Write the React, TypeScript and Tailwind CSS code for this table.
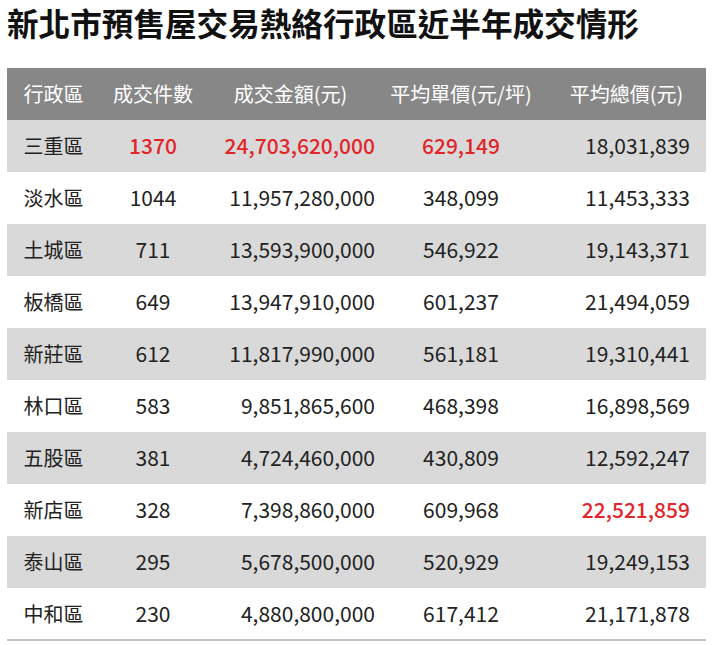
import React from 'react';

interface Row {
  area: string;
  count: string;
  amount: string;
  unit: string;
  avg: string;
  hot?: ('count' | 'amount' | 'unit' | 'avg')[];
}

const rows: Row[] = [
  { area: '三重區', count: '1370', amount: '24,703,620,000', unit: '629,149', avg: '18,031,839', hot: ['count', 'amount', 'unit'] },
  { area: '淡水區', count: '1044', amount: '11,957,280,000', unit: '348,099', avg: '11,453,333' },
  { area: '土城區', count: '711', amount: '13,593,900,000', unit: '546,922', avg: '19,143,371' },
  { area: '板橋區', count: '649', amount: '13,947,910,000', unit: '601,237', avg: '21,494,059' },
  { area: '新莊區', count: '612', amount: '11,817,990,000', unit: '561,181', avg: '19,310,441' },
  { area: '林口區', count: '583', amount: '9,851,865,600', unit: '468,398', avg: '16,898,569' },
  { area: '五股區', count: '381', amount: '4,724,460,000', unit: '430,809', avg: '12,592,247' },
  { area: '新店區', count: '328', amount: '7,398,860,000', unit: '609,968', avg: '22,521,859', hot: ['avg'] },
  { area: '泰山區', count: '295', amount: '5,678,500,000', unit: '520,929', avg: '19,249,153' },
  { area: '中和區', count: '230', amount: '4,880,800,000', unit: '617,412', avg: '21,171,878' },
];

const font = { fontFamily: '"Noto Sans CJK TC", "Noto Sans", sans-serif' };

const App: React.FC = () => {
  const tone = (row: Row, key: 'count' | 'amount' | 'unit' | 'avg') =>
    row.hot?.includes(key) ? 'text-[#e1262b] font-medium' : 'text-[#222222]';

  return (
    <div className="w-[720px] h-[645px] bg-white overflow-hidden" style={font}>
      {/* Title */}
      <h1 className="pl-[7px] text-[31.6px] leading-[44px] font-bold text-[#111111]">
        新北市預售屋交易熱絡行政區近半年成交情形
      </h1>

      {/* Table */}
      <table className="mt-[24px] ml-[7px] w-[699px] table-fixed border-collapse text-[20px]">
        <colgroup>
          <col className="w-[93px]" />
          <col className="w-[106px]" />
          <col className="w-[169px]" />
          <col className="w-[172px]" />
          <col className="w-[159px]" />
        </colgroup>
        <thead>
          <tr className="h-[52px] bg-[#878787] text-white">
            <th className="font-normal text-center">行政區</th>
            <th className="font-normal text-center">成交件數</th>
            <th className="font-normal text-center">成交金額(元)</th>
            <th className="font-normal text-center">平均單價(元/坪)</th>
            <th className="font-normal text-center">平均總價(元)</th>
          </tr>
        </thead>
        <tbody>
          {rows.map((row, i) => (
            <tr
              key={row.area}
              className={`h-[52px] ${i % 2 === 0 ? 'bg-[#d9d9d9]' : 'bg-white'} ${i === rows.length - 1 ? 'border-b-2 border-[#c4c4c4]' : ''}`}
            >
              <td className="text-center text-[#222222]">{row.area}</td>
              <td className={`text-center text-[21px] ${tone(row, 'count')}`}>{row.count}</td>
              <td className={`text-right text-[21px] ${tone(row, 'amount')}`}>{row.amount}</td>
              <td className={`text-center text-[21px] ${tone(row, 'unit')}`}>{row.unit}</td>
              <td className={`text-right text-[21px] pr-[16px] ${tone(row, 'avg')}`}>{row.avg}</td>
            </tr>
          ))}
        </tbody>
      </table>
    </div>
  );
};

export default App;
